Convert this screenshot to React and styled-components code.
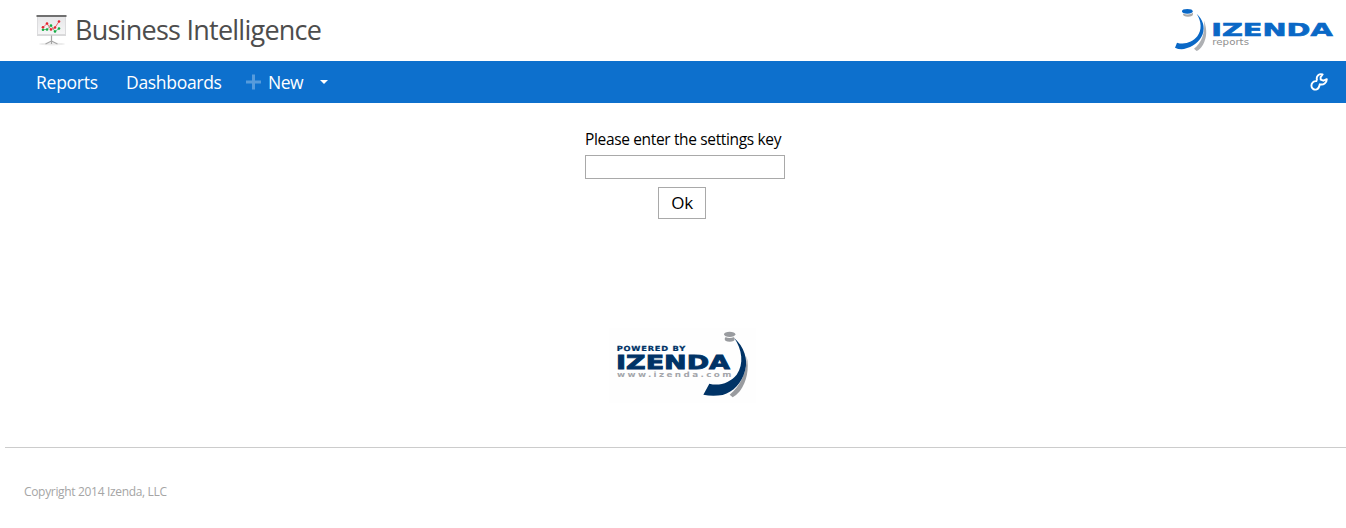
import React from "react";
import styled, { createGlobalStyle } from "styled-components";

const Global = createGlobalStyle`
  * { box-sizing: border-box; }
  body {
    margin: 0;
    background: #fff;
    color: #000;
    font-family: "Open Sans", "Noto Sans", sans-serif;
    overflow: hidden;
  }
`;

const Page = styled.div`
  height: 528px;
  display: flex;
  flex-direction: column;
`;

const Header = styled.header`
  height: 61px;
  display: flex;
  justify-content: space-between;
`;

const Brand = styled.div`
  display: flex;
  padding: 14px 0 0 36px;
  gap: 7px;
`;

const Title = styled.h1`
  margin: -2px 0 0;
  font-size: 27px;
  line-height: 36px;
  font-weight: 400;
  letter-spacing: -0.75px;
  color: #4d4d4d;
  white-space: nowrap;
`;

const Nav = styled.nav`
  height: 42px;
  flex: none;
  background: #0d70cd;
  display: flex;
  align-items: center;
  padding: 0 18px 0 36px;
`;

const NavLink = styled.a`
  color: #fff;
  font-size: 17.5px;
  line-height: 24px;
  letter-spacing: ${(p) => p.$spacing};
  width: ${(p) => p.$width};
  margin-right: ${(p) => p.$gap};
  padding-bottom: 1px;
  white-space: nowrap;
`;

const PlusIcon = styled.svg`
  margin-right: 7px;
`;

const SettingsIcon = styled.svg`
  margin-left: auto;
`;

const Main = styled.main`
  height: 344px;
  flex: none;
  display: flex;
  flex-direction: column;
`;

const KeyForm = styled.form`
  width: 200px;
  margin: 25px 0 0 585px;
  display: flex;
  flex-direction: column;
`;

const Label = styled.label`
  font-size: 15.5px;
  line-height: 22px;
  letter-spacing: -0.35px;
  white-space: nowrap;
`;

const KeyInput = styled.input`
  width: 200px;
  height: 24px;
  margin-top: 5px;
  padding: 0 4px;
  border: 1px solid #a9a9a9;
  background: #fff;
  font: inherit;
  outline: none;
`;

const OkButton = styled.button`
  width: 48px;
  height: 32px;
  margin: 8px 0 0 73px;
  padding: 0;
  border: 1px solid #a9a9a9;
  background: #fff;
  color: #000;
  font: 17px/30px "Open Sans", "Noto Sans", sans-serif;
  letter-spacing: -0.4px;
`;

const PoweredBy = styled.svg`
  margin: 101px 0 0 605px;
`;

const Footer = styled.footer`
  margin-left: 5px;
  border-top: 1px solid #ccc;
  padding: 35px 0 0 19px;
  font-size: 12px;
  line-height: 18px;
  letter-spacing: -0.33px;
  color: #a5a5a5;
`;

function BoardIcon() {
  return (
    <svg width="32" height="32" viewBox="0 0 32 32">
      <defs>
        <linearGradient id="board" x1="0" y1="0" x2="0" y2="1">
          <stop offset="0" stopColor="#e6e6e8" />
          <stop offset="1" stopColor="#f6f6f7" />
        </linearGradient>
      </defs>
      <ellipse cx="16" cy="30" rx="13" ry="1.5" fill="#ececec" />
      <rect x="1.5" y="2" width="28" height="18.5" fill="url(#board)" stroke="#dcdcde" />
      <rect x="0.5" y="1" width="30" height="2" fill="#707070" />
      <path d="M1 21.3h29" stroke="#d0d0d2" />
      <path d="M15.5 21.5v8.5M15.5 27l-6 3M15.5 27l6 3" stroke="#a5a5a5" strokeWidth="1.2" fill="none" />
      <path d="M7 15.5H11L15 11.5L19 17.5L23 14.5" stroke="#6cc98c" fill="none" />
      <path d="M7 13.5L11 9.5L15 15.5L19 13.5L23 7.5" stroke="#ec6470" fill="none" />
      <g fill="#16ad45">
        <circle cx="7" cy="15.8" r="1.3" />
        <circle cx="11" cy="15.5" r="1.3" />
        <circle cx="15" cy="11.5" r="1.3" />
        <circle cx="19" cy="17.5" r="1.3" />
        <circle cx="23" cy="14.5" r="1.3" />
      </g>
      <g fill="#e5242f">
        <circle cx="7" cy="13.3" r="1.3" />
        <circle cx="11" cy="9.5" r="1.3" />
        <circle cx="15" cy="15.5" r="1.3" />
        <circle cx="19" cy="13.5" r="1.3" />
        <circle cx="23" cy="7.5" r="1.3" />
      </g>
    </svg>
  );
}

function HeaderLogo() {
  return (
    <svg width="181" height="61" viewBox="0 0 543 183">
      <path d="M117 62C127 89 126 111 114 134C107 145 101 150 95 153L87 146C109 129 121 101 117 62Z" fill="#aeb0b3" />
      <path d="M95 41C113 58 121 79 113 103C104 126 83 142 57 147Q42 149 30 143L36 128C58 135 83 127 97 109C111 89 110 66 95 41Z" fill="#0a68c6" />
      <ellipse cx="69" cy="42" rx="15" ry="8" fill="#aaa" />
      <ellipse cx="67" cy="35" rx="17" ry="8.5" fill="#fff" />
      <ellipse cx="67" cy="34" rx="16" ry="7" fill="#0a68c6" />
      <text x="139" y="107" textLength="364" lengthAdjust="spacingAndGlyphs" fontFamily="DejaVu Sans" fontWeight="700" fontSize="55" fill="#0a68c6" stroke="#0a68c6" strokeWidth="2">IZENDA</text>
      <text x="142" y="135" textLength="110" lengthAdjust="spacingAndGlyphs" fontFamily="DejaVu Sans" fontSize="27" fill="#8e8e8e">reports</text>
    </svg>
  );
}

function FooterLogo() {
  return (
    <PoweredBy width="155" height="90" viewBox="0 0 465 270">
      <rect x="12" y="25" width="441" height="225" fill="#fefefe" />
      <path d="M425 108C433 147 426 184 405 213Q393 227 383 232L374 224C405 199 426 159 425 108Z" fill="#999b9f" />
      <path d="M388 54C416 80 431 117 420 152C410 189 386 215 353 225Q321 230 295 224L313 191C344 199 375 188 395 164C418 131 411 88 388 54Z" fill="#003366" />
      <ellipse cx="374" cy="57" rx="15" ry="8" fill="#999b9f" />
      <ellipse cx="374" cy="45" rx="18" ry="9" fill="#fefefe" />
      <ellipse cx="374" cy="43" rx="17" ry="8" fill="#999b9f" />
      <text x="35" y="93" textLength="208" lengthAdjust="spacingAndGlyphs" fontFamily="DejaVu Sans" fontWeight="700" fontSize="21" letterSpacing="2" fill="#003366" stroke="#003366" strokeWidth="0.7">POWERED BY</text>
      <text x="33" y="146" textLength="342" lengthAdjust="spacingAndGlyphs" fontFamily="DejaVu Sans" fontWeight="700" fontSize="56" fill="#003366" stroke="#003366" strokeWidth="2.5">IZENDA</text>
      <text x="36" y="170" textLength="350" lengthAdjust="spacingAndGlyphs" fontFamily="DejaVu Sans" fontWeight="700" fontSize="22" letterSpacing="6" fill="#a4a6ab">www.izenda.com</text>
    </PoweredBy>
  );
}

export default function App() {
  return (
    <Page>
      <Global />
      <Header>
        <Brand>
          <BoardIcon />
          <Title>Business Intelligence</Title>
        </Brand>
        <HeaderLogo />
      </Header>
      <Nav>
        <NavLink $width="62px" $gap="28px" $spacing="-0.25px">Reports</NavLink>
        <NavLink $width="96px" $gap="24px" $spacing="-0.3px">Dashboards</NavLink>
        <PlusIcon width="15" height="16" viewBox="0 0 15 16">
          <path d="M7.5 0.5v15M0 8h15" stroke="#569bdc" strokeWidth="3" />
        </PlusIcon>
        <NavLink $width="35px" $gap="17px" $spacing="-0.5px">New</NavLink>
        <svg width="8" height="4" viewBox="0 0 8 4">
          <path d="M0 0h8L4 4z" fill="#fff" />
        </svg>
        <SettingsIcon width="18" height="18" viewBox="0 0 18 18">
          <path d="M12.6 1.5C9.3.2 6 3 6.9 6.5L6.3 8.1C3.5 7.9 1.4 10 1.4 12.7C1.4 15.4 4.1 17.3 6.7 16.4C9.3 15.5 9.3 13 9.8 11.3C13.4 12.3 16.9 10 16.8 6.1L13.4 7.7L10.7 6.6L10.6 4.1Z" fill="none" stroke="#fff" strokeWidth="1.9" strokeLinejoin="round" />
        </SettingsIcon>
      </Nav>
      <Main>
        <KeyForm onSubmit={(e) => e.preventDefault()}>
          <Label htmlFor="settings-key">Please enter the settings key</Label>
          <KeyInput id="settings-key" />
          <OkButton>Ok</OkButton>
        </KeyForm>
        <FooterLogo />
      </Main>
      <Footer>Copyright 2014 Izenda, LLC</Footer>
    </Page>
  );
}
